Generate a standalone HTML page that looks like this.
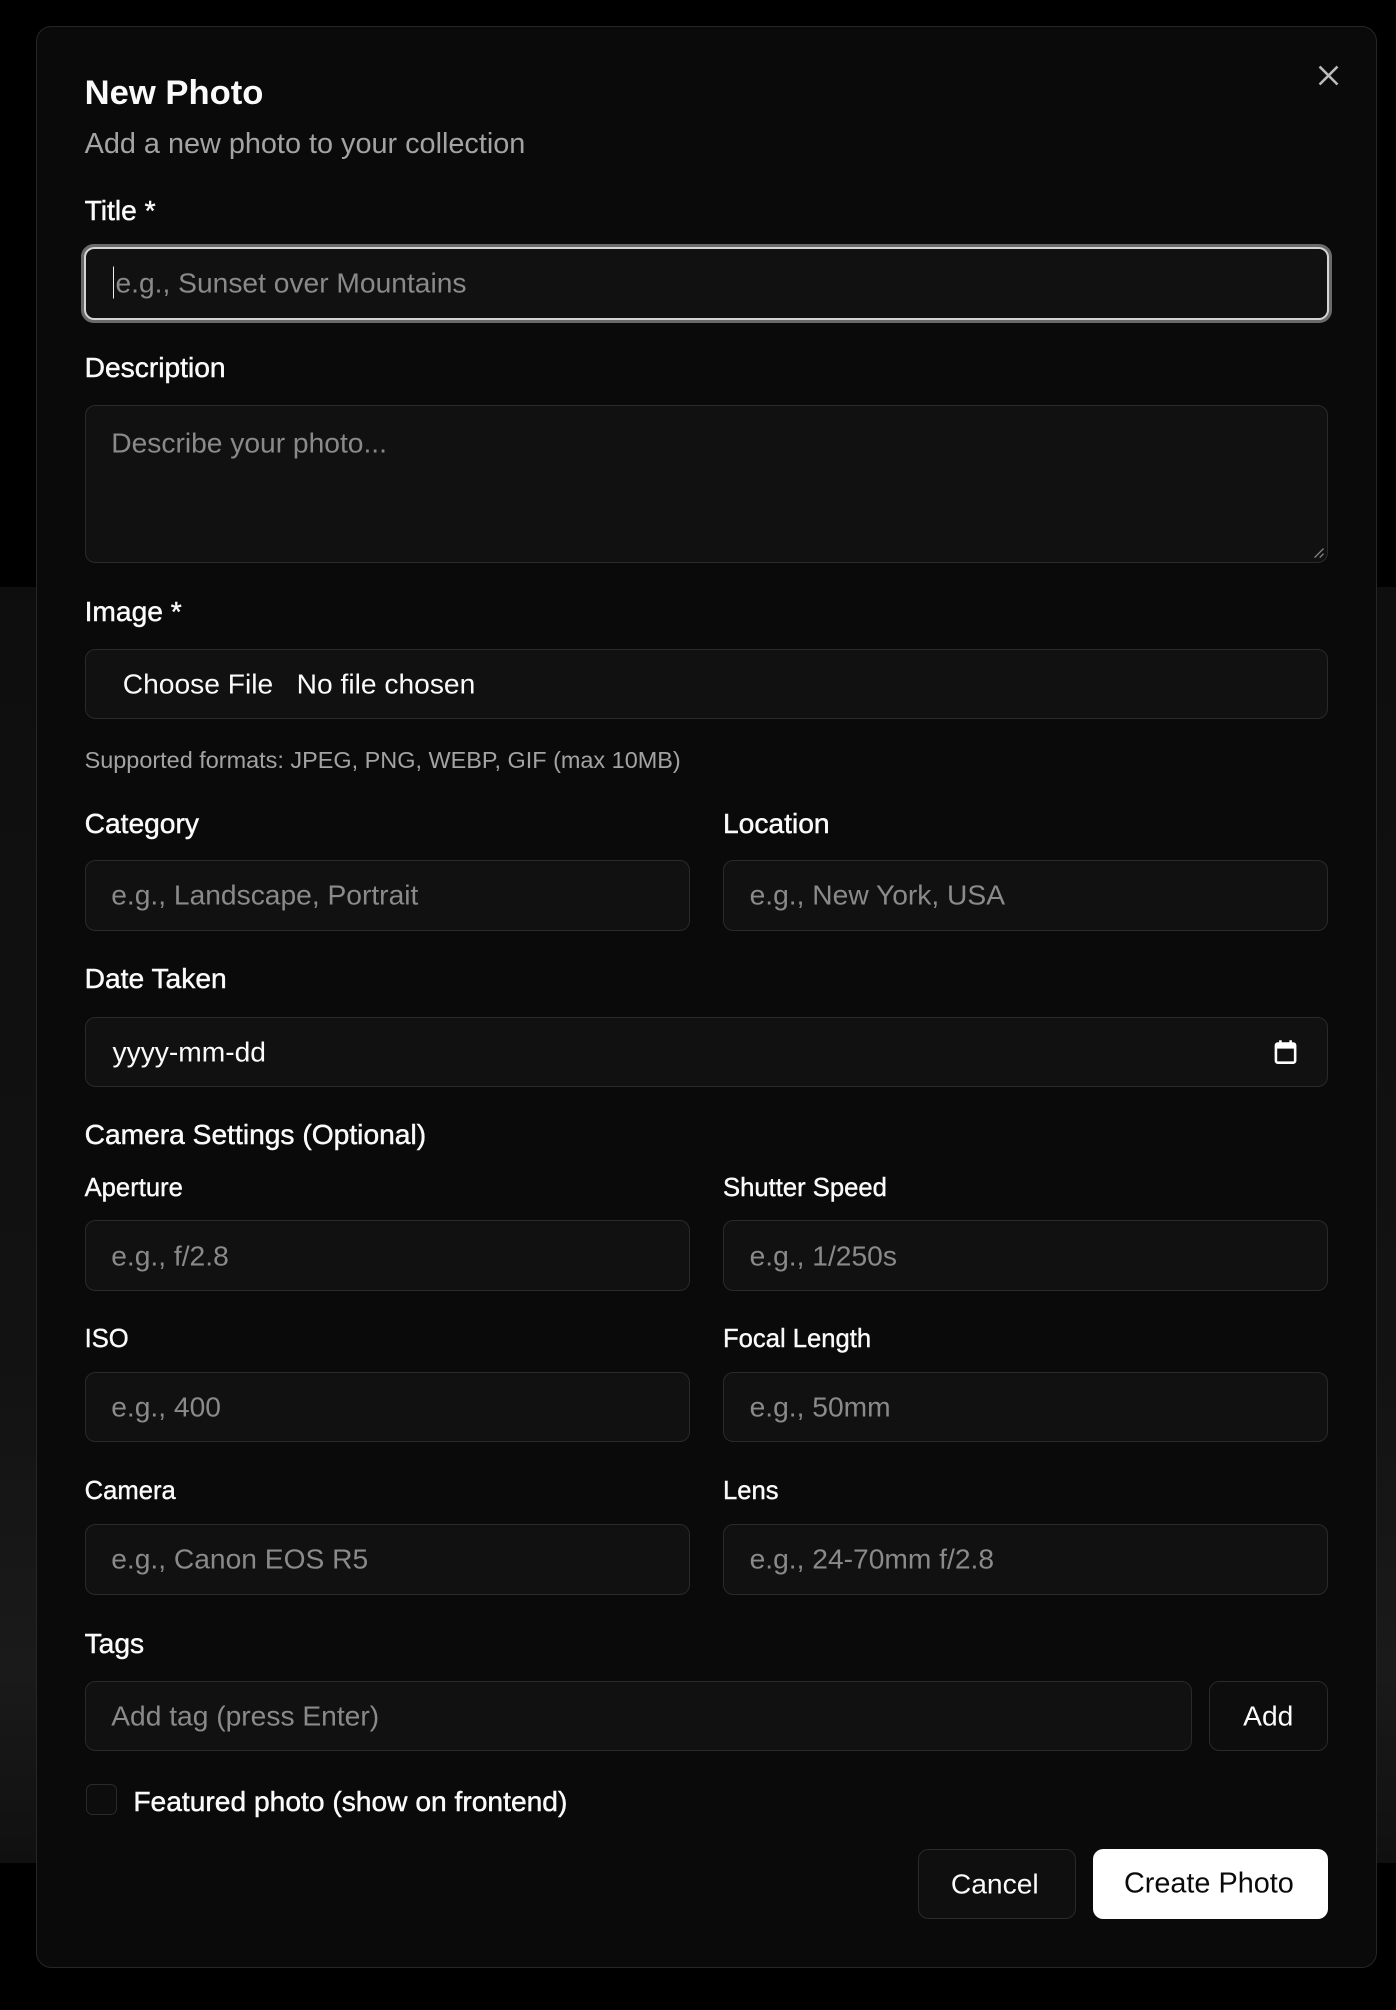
<!DOCTYPE html>
<html><head><meta charset="utf-8"><style>
html,body{margin:0;padding:0;background:#000;}
body{width:1089px;height:1568px;zoom:1.28191;position:relative;overflow:hidden;font-family:"Liberation Sans",Arial,sans-serif;color:#fafafa;}
.bgimg{position:absolute;left:0;top:458px;width:1089px;height:995px;background:linear-gradient(180deg,#0e0e0e 0%,#121212 60%,#1a1a1a 85%,#101010 100%);}
.modal{position:absolute;left:28px;top:20px;width:1045px;height:1514px;background:#0a0a0a;border:1px solid #262626;border-radius:12px;}
.a{position:absolute;white-space:nowrap;}
.lbl{font-size:22px;color:#fafafa;line-height:1;-webkit-text-stroke:0.35px #fafafa;}
.sl{font-size:20px;color:#fafafa;line-height:1;-webkit-text-stroke:0.3px #fafafa;}
.in{position:absolute;background:#111;border:1px solid #2a2a2a;border-radius:8px;box-sizing:border-box;}
.ph{position:absolute;left:20px;top:50%;transform:translateY(-50%);font-size:22px;color:#8a8a8a;white-space:nowrap;}
</style></head><body>
<div class="bgimg"></div>
<div class="modal"></div>
<svg class="a" style="left:1027px;top:50px" width="18" height="18" viewBox="0 0 18 18"><path d="M2 2L16 16M16 2L2 16" stroke="#bbb" stroke-width="2" fill="none"/></svg>
<div class="a" style="left:66px;top:58px;font-size:27px;font-weight:bold;">New Photo</div>
<div class="a" style="left:66px;top:100px;font-size:22.5px;color:#a3a3a3;">Add a new photo to your collection</div>

<div class="a lbl" style="left:66px;top:153px">Title *</div>
<div class="in" style="left:63px;top:190px;width:976px;height:62px;border:3px solid #6a6a6a;border-radius:10px;padding:0;background:#6a6a6a"><div style="position:absolute;inset:0;border:2px solid #d4d4d4;border-radius:8px;background:#111"></div><div class="ph" style="left:23px"><span style="border-left:1.5px solid #eee;margin-right:1px"></span>e.g., Sunset over Mountains</div></div>

<div class="a lbl" style="left:66px;top:275px">Description</div>
<div class="in" style="left:66px;top:316px;width:970px;height:123px"><div class="ph" style="top:29px">Describe your photo...</div>
<svg style="position:absolute;right:2px;bottom:2px" width="10" height="10"><path d="M9 2L2 9M9 6L6 9" stroke="#888" stroke-width="1"/></svg></div>

<div class="a lbl" style="left:66px;top:466px">Image *</div>
<div class="in" style="left:66px;top:506px;width:970px;height:55px"><div class="ph" style="left:29px;color:#fafafa">Choose File&nbsp;&nbsp; No file chosen</div></div>
<div class="a" style="left:66px;top:583px;font-size:18.3px;color:#a3a3a3">Supported formats: JPEG, PNG, WEBP, GIF (max 10MB)</div>

<div class="a lbl" style="left:66px;top:631px">Category</div>
<div class="a lbl" style="left:564px;top:631px">Location</div>
<div class="in" style="left:66px;top:671px;width:472px;height:55px"><div class="ph">e.g., Landscape, Portrait</div></div>
<div class="in" style="left:564px;top:671px;width:472px;height:55px"><div class="ph">e.g., New York, USA</div></div>

<div class="a lbl" style="left:66px;top:752px">Date Taken</div>
<div class="in" style="left:66px;top:793px;width:970px;height:55px"><div class="ph" style="left:21px;color:#fafafa">yyyy-mm-dd</div>
<svg style="position:absolute;left:927px;top:17px" width="18" height="20" viewBox="0 0 18 20"><rect x="1.5" y="3.5" width="15" height="15" rx="1.5" fill="none" stroke="#fff" stroke-width="2"/><rect x="1.5" y="3.5" width="15" height="4" fill="#fff"/><path d="M5 1v3M13 1v3" stroke="#fff" stroke-width="2"/></svg></div>

<div class="a lbl" style="left:66px;top:874px">Camera Settings (Optional)</div>

<div class="a sl" style="left:66px;top:917px">Aperture</div>
<div class="a sl" style="left:564px;top:917px">Shutter Speed</div>
<div class="in" style="left:66px;top:952px;width:472px;height:55px"><div class="ph">e.g., f/2.8</div></div>
<div class="in" style="left:564px;top:952px;width:472px;height:55px"><div class="ph">e.g., 1/250s</div></div>

<div class="a sl" style="left:66px;top:1035px">ISO</div>
<div class="a sl" style="left:564px;top:1035px">Focal Length</div>
<div class="in" style="left:66px;top:1070px;width:472px;height:55px"><div class="ph">e.g., 400</div></div>
<div class="in" style="left:564px;top:1070px;width:472px;height:55px"><div class="ph">e.g., 50mm</div></div>

<div class="a sl" style="left:66px;top:1154px">Camera</div>
<div class="a sl" style="left:564px;top:1154px">Lens</div>
<div class="in" style="left:66px;top:1189px;width:472px;height:55px"><div class="ph">e.g., Canon EOS R5</div></div>
<div class="in" style="left:564px;top:1189px;width:472px;height:55px"><div class="ph">e.g., 24-70mm f/2.8</div></div>

<div class="a lbl" style="left:66px;top:1271px">Tags</div>
<div class="in" style="left:66px;top:1311px;width:864px;height:55px"><div class="ph">Add tag (press Enter)</div></div>
<div class="in" style="left:943px;top:1311px;width:93px;height:55px;background:#0d0d0d"><div class="ph" style="left:26px;color:#fafafa">Add</div></div>

<div class="in" style="left:67px;top:1392px;width:24px;height:24px;border-radius:5px;background:#0d0d0d"></div>
<div class="a lbl" style="left:104px;top:1394px">Featured photo (show on frontend)</div>

<div class="in" style="left:716px;top:1442px;width:123px;height:55px;background:#0f0f0f"><div class="ph" style="left:25px;color:#fafafa">Cancel</div></div>
<div class="in" style="left:853px;top:1442px;width:183px;height:55px;background:#fff;border-color:#fff"><div class="ph" style="left:23px;color:#0a0a0a;font-size:22.5px">Create Photo</div></div>
</body></html>
